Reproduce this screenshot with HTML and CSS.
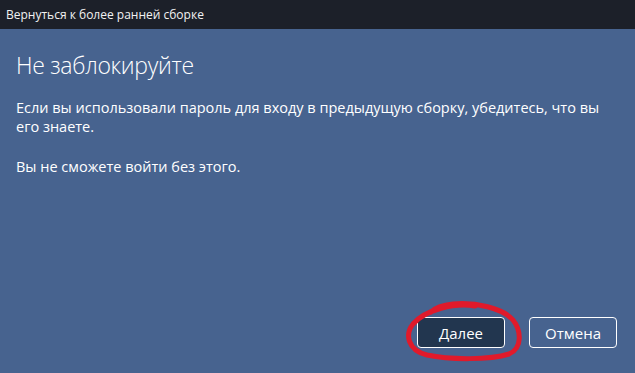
FILE: index.html
```html
<!DOCTYPE html>
<html lang="ru">
<head>
<meta charset="utf-8">
<title>Вернуться к более ранней сборке</title>
<link rel="stylesheet" href="styles.css">
</head>
<body>
<div class="window">
  <header class="titlebar">Вернуться к более ранней сборке</header>
  <main class="content">
    <h1 class="heading">Не заблокируйте</h1>
    <p class="text">Если вы использовали пароль для входу в предыдущую сборку, убедитесь, что вы его знаете.</p>
    <p class="text">Вы не сможете войти без этого.</p>
  </main>
  <footer class="actions">
    <div class="btn-wrap">
      <button class="btn btn-primary">Далее</button>
      <svg class="scribble" viewBox="0 0 120 64" width="120" height="64" aria-hidden="true">
        <path d="M70 6 C 50 2, 20 10, 8 24 C 0 34, 2 50, 22 55 C 45 60, 85 60, 104 54 C 118 48, 116 30, 108 20 C 98 8, 70 2, 48 4 C 38 5, 30 8, 26 12"
              fill="none" stroke="#e01a2b" stroke-width="5" stroke-linecap="round" stroke-linejoin="round"/>
      </svg>
    </div>
    <button class="btn btn-secondary">Отмена</button>
  </footer>
</div>
</body>
</html>
```
FILE: styles.css
```css
* { box-sizing: border-box; }
html, body {
  margin: 0;
  padding: 0;
  width: 635px;
  height: 373px;
  overflow: hidden;
  background: #47638f;
}
.window {
  display: flex;
  flex-direction: column;
  width: 635px;
  height: 373px;
  font-family: "Open Sans", "Noto Sans", sans-serif;
  color: #ffffff;
}
.titlebar {
  height: 29px;
  background: #1c2029;
  font-size: 12px;
  line-height: 29px;
  padding-left: 6px;
  color: #f2f2f2;
}
.content {
  flex: 1;
  padding: 19px 16px 0 16px;
}
.heading {
  margin: 0 0 16px 0;
  font-size: 23px;
  font-weight: 300;
  letter-spacing: -0.3px;
  line-height: 34px;
}
.text {
  margin: 0 0 21px 0;
  font-size: 14.5px;
  line-height: 19px;
}
.actions {
  display: flex;
  justify-content: flex-end;
  gap: 24px;
  padding: 0 18px 25px 0;
}
.btn-wrap {
  position: relative;
}
.btn {
  width: 88px;
  height: 31px;
  border: 1px solid #ffffff;
  border-radius: 4px;
  font-family: inherit;
  font-size: 15px;
  color: #ffffff;
  padding: 0;
}
.btn-primary {
  background: #22364f;
}
.btn-secondary {
  background: transparent;
}
.scribble {
  position: absolute;
  left: -12px;
  top: -17px;
  pointer-events: none;
}
```
